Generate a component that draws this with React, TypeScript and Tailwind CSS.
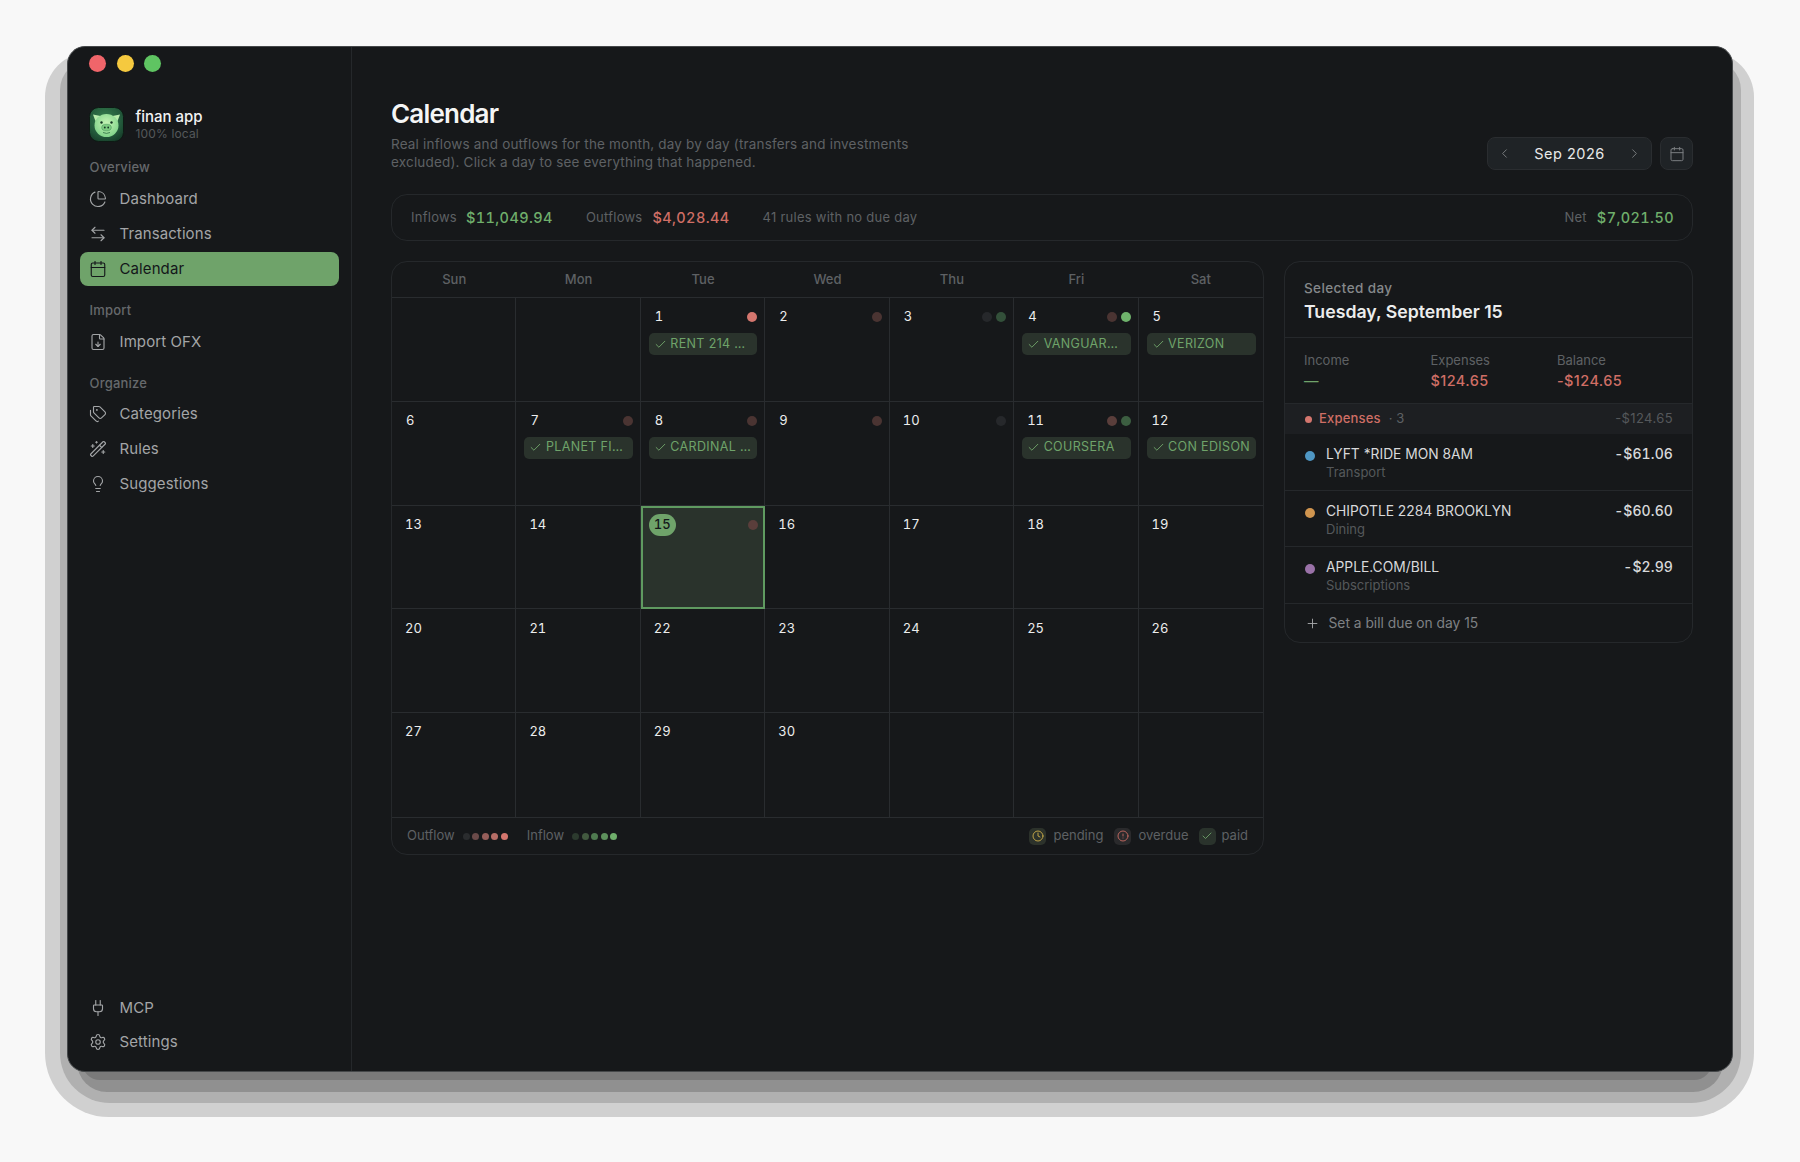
import React from 'react';
import {
  ArrowLeftRight,
  Calendar,
  ChartPie,
  Check,
  ChevronLeft,
  ChevronRight,
  CircleAlert,
  Clock,
  FileDown,
  Lightbulb,
  Plug,
  Plus,
  Settings,
  Tags,
  WandSparkles,
} from 'lucide-react';

const WEEKDAYS = ['Sun', 'Mon', 'Tue', 'Wed', 'Thu', 'Fri', 'Sat'];

interface DayCell {
  day?: number;
  out?: string;
  inflow?: string;
  bill?: string;
}

const CELLS: DayCell[] = [
  {},
  {},
  { day: 1, out: 'bg-[#d4766e]', bill: 'RENT 214 …' },
  { day: 2, out: 'bg-[#4a3432]' },
  { day: 3, out: 'bg-[#26282b]', inflow: 'bg-[#33503a]' },
  { day: 4, out: 'bg-[#4a3432]', inflow: 'bg-[#6fb36c]', bill: 'VANGUAR…' },
  { day: 5, bill: 'VERIZON' },
  { day: 6 },
  { day: 7, out: 'bg-[#4a3432]', bill: 'PLANET FI…' },
  { day: 8, out: 'bg-[#4a3432]', bill: 'CARDINAL …' },
  { day: 9, out: 'bg-[#4a3432]' },
  { day: 10, out: 'bg-[#26282b]' },
  { day: 11, out: 'bg-[#5a3e3b]', inflow: 'bg-[#3c5e41]', bill: 'COURSERA' },
  { day: 12, bill: 'CON EDISON' },
  { day: 13 },
  { day: 14 },
  { day: 15, out: 'bg-[#5a3e3b]' },
  { day: 16 },
  { day: 17 },
  { day: 18 },
  { day: 19 },
  { day: 20 },
  { day: 21 },
  { day: 22 },
  { day: 23 },
  { day: 24 },
  { day: 25 },
  { day: 26 },
  { day: 27 },
  { day: 28 },
  { day: 29 },
  { day: 30 },
  {},
  {},
  {},
];

const TRANSACTIONS = [
  { name: 'LYFT *RIDE MON 8AM', category: 'Transport', amount: '-$61.06', dot: 'bg-[#4f97c4]' },
  { name: 'CHIPOTLE 2284 BROOKLYN', category: 'Dining', amount: '-$60.60', dot: 'bg-[#d0954f]' },
  { name: 'APPLE.COM/BILL', category: 'Subscriptions', amount: '-$2.99', dot: 'bg-[#9a72a8]' },
];

function PigLogo() {
  return (
    <svg viewBox="0 0 35 35" className="h-[35px] w-[35px] shrink-0">
      <defs>
        <radialGradient id="pigBg" cx="0.45" cy="0.35" r="0.8">
          <stop offset="0" stopColor="#37804f" />
          <stop offset="0.6" stopColor="#235a3b" />
          <stop offset="1" stopColor="#123324" />
        </radialGradient>
        <radialGradient id="pigFace" cx="0.5" cy="0.4" r="0.65">
          <stop offset="0" stopColor="#c4f3b4" />
          <stop offset="1" stopColor="#7ad086" />
        </radialGradient>
      </defs>
      <rect x="0.5" y="0.5" width="34" height="34" rx="9" fill="url(#pigBg)" stroke="#0e1a14" />
      <path d="M4 7.5 L14 9.5 L8 18 Z" fill="#b8ecac" />
      <path d="M31 7.5 L21 9.5 L27 18 Z" fill="#b8ecac" />
      <ellipse cx="17.5" cy="18.5" rx="12" ry="11.5" fill="url(#pigFace)" />
      <circle cx="12.5" cy="15.5" r="1.2" fill="#143524" />
      <circle cx="22.5" cy="15.5" r="1.2" fill="#143524" />
      <ellipse cx="17.5" cy="20.5" rx="4.8" ry="3.3" fill="#7ccb80" stroke="#3f8a55" strokeWidth="0.5" />
      <circle cx="15.8" cy="20.5" r="0.9" fill="#143524" />
      <circle cx="19.2" cy="20.5" r="0.9" fill="#143524" />
      <path d="M14 25.5 Q17.5 27.3 21 25.5" stroke="#2c6b41" strokeWidth="0.8" fill="none" />
    </svg>
  );
}

function NavItem({ icon: Icon, label, active }: { icon: React.ElementType; label: string; active?: boolean }) {
  return (
    <div
      className={`flex h-[34px] items-center gap-[12.5px] rounded-lg px-[9.5px] text-[15px] tracking-[0.1px] ${
        active ? 'bg-[#6fa36a] text-[#14171a]' : 'text-[#a3a5a7]'
      }`}
    >
      <Icon className="h-[18px] w-[18px] shrink-0" strokeWidth={1.5} />
      <span>{label}</span>
    </div>
  );
}

function NavLabel({ children }: { children: React.ReactNode }) {
  return <div className="flex h-[20px] items-center px-[10px] text-[13px] font-medium tracking-[0.2px] text-[#66696c]">{children}</div>;
}

function Sidebar() {
  return (
    <aside className="flex w-[284px] shrink-0 flex-col border-r border-[#25282b] pb-[12px] pl-[11.5px] pr-[12px] pt-[7.5px]">
      <div className="flex h-[17px] items-center gap-[10.5px] pl-[9.5px]">
        <span className="h-[17px] w-[17px] rounded-full bg-[#f0656a]" />
        <span className="h-[17px] w-[17px] rounded-full bg-[#f5c93f]" />
        <span className="h-[17px] w-[17px] rounded-full bg-[#5fc462]" />
      </div>
      <div className="mt-[35px] flex items-center gap-[12px] pl-[9px]">
        <PigLogo />
        <div>
          <div className="text-[15px] font-medium leading-[20px] text-[#f2f3f3]">finan app</div>
          <div className="text-[12px] leading-[14px] tracking-[0.15px] text-[#55585b]">100% local</div>
        </div>
      </div>
      <div className="mt-[16.5px]">
        <NavLabel>Overview</NavLabel>
      </div>
      <div className="mt-[4px] flex flex-col gap-px">
        <NavItem icon={ChartPie} label="Dashboard" />
        <NavItem icon={ArrowLeftRight} label="Transactions" />
        <NavItem icon={Calendar} label="Calendar" active />
      </div>
      <div className="mt-[15px]">
        <NavLabel>Import</NavLabel>
      </div>
      <div className="mt-[4px]">
        <NavItem icon={FileDown} label="Import OFX" />
      </div>
      <div className="mt-[14.5px]">
        <NavLabel>Organize</NavLabel>
      </div>
      <div className="mt-[3.5px] flex flex-col gap-px">
        <NavItem icon={Tags} label="Categories" />
        <NavItem icon={WandSparkles} label="Rules" />
        <NavItem icon={Lightbulb} label="Suggestions" />
      </div>
      <div className="mt-auto flex flex-col">
        <NavItem icon={Plug} label="MCP" />
        <NavItem icon={Settings} label="Settings" />
      </div>
    </aside>
  );
}

function Header() {
  return (
    <div className="flex items-end justify-between">
      <div>
        <h1 className="text-[26px] font-semibold leading-[32px] tracking-[-0.8px] text-[#f4f5f5]">Calendar</h1>
        <p className="mt-[5px] max-w-[560px] text-[13.5px] leading-[18px] tracking-[0.18px] text-[#5e6164]">
          Real inflows and outflows for the month, day by day (transfers and investments excluded). Click a day to see everything that happened.
        </p>
      </div>
      <div className="mb-px flex gap-[8px]">
        <div className="flex h-[33px] w-[165px] items-center justify-between rounded-lg border border-[#2a2d30] bg-[#1f2326] px-[9px]">
          <ChevronLeft className="h-[15px] w-[15px] text-[#7b7e80]" strokeWidth={1.5} />
          <span className="text-[14.5px] tracking-[0.5px] text-[#e8e9e9]">Sep 2026</span>
          <ChevronRight className="h-[15px] w-[15px] text-[#7b7e80]" strokeWidth={1.5} />
        </div>
        <div className="flex h-[33px] w-[33px] items-center justify-center rounded-lg border border-[#2a2d30] bg-[#1f2326]">
          <Calendar className="h-[16px] w-[16px] text-[#7b7e80]" strokeWidth={1.5} />
        </div>
      </div>
    </div>
  );
}

function StatsBar() {
  return (
    <div className="mt-[23px] flex h-[47px] items-center rounded-2xl border border-[#25282b] pl-[19px] pr-[18px] text-[13px] tracking-[0.25px] text-[#5e6164]">
      <span>Inflows</span>
      <span className="ml-[9px] text-[14.5px] font-medium tabular-nums tracking-[0.4px] text-[#6fae6b]">$11,049.94</span>
      <span className="ml-[33px]">Outflows</span>
      <span className="ml-[10px] text-[14.5px] font-medium tabular-nums tracking-[0.4px] text-[#cf6e65]">$4,028.44</span>
      <span className="ml-[33px]">41 rules with no due day</span>
      <span className="ml-auto">Net</span>
      <span className="ml-[10px] text-[14.5px] font-medium tabular-nums tracking-[0.4px] text-[#6fae6b]">$7,021.50</span>
    </div>
  );
}

function Day({ cell, index }: { cell: DayCell; index: number }) {
  const selected = cell.day === 15;
  const lastCol = index % 7 === 6;
  const lastRow = index >= 28;
  const singleDigit = cell.day !== undefined && cell.day < 10;
  return (
    <div
      className={`flex min-w-0 flex-col ${
        selected
          ? 'border-2 border-[#5f9a60] bg-[#2a332c] pl-[6px] pr-[5px] pt-[6px]'
          : `border-[#292c2f] pl-[8px] pr-[7px] pt-[8px] ${lastCol ? '' : 'border-r'} ${lastRow ? '' : 'border-b'}`
      }`}
    >
      {cell.day !== undefined && (
        <div className="flex h-[22px] items-center justify-between">
          <span
            className={`flex h-[22px] items-center rounded-full text-[13px] tabular-nums ${singleDigit ? 'px-[6px]' : 'px-[5px]'} ${
              selected ? 'bg-[#6fa36a] font-medium text-[#14171a]' : 'text-[#eceded]'
            }`}
          >
            {cell.day}
          </span>
          <span className="flex items-center gap-[4px]">
            {cell.out && <span className={`h-[10px] w-[10px] rounded-full ${cell.out}`} />}
            {cell.inflow && <span className={`h-[10px] w-[10px] rounded-full ${cell.inflow}`} />}
          </span>
        </div>
      )}
      {cell.bill && (
        <div className="mt-[5px] flex h-[22px] items-center gap-[3.5px] whitespace-nowrap rounded-[5px] bg-[#2a332c] pl-[5px] pr-[3px] text-[12.5px] tracking-[0.35px] text-[#6fa36a]">
          <Check className="h-[13px] w-[13px] shrink-0" strokeWidth={1.75} />
          <span>{cell.bill}</span>
        </div>
      )}
    </div>
  );
}

function LegendDots({ colors }: { colors: string[] }) {
  return (
    <span className="flex gap-[2.5px]">
      {colors.map((c) => (
        <span key={c} className={`h-[7px] w-[7px] rounded-full ${c}`} />
      ))}
    </span>
  );
}

function CalendarGrid() {
  return (
    <div className="w-[873px] shrink-0 overflow-hidden rounded-2xl border border-[#25282b]">
      <div className="grid h-[36px] grid-cols-7 border-b border-[#292c2f]">
        {WEEKDAYS.map((d) => (
          <div key={d} className="flex items-center justify-center text-[13px] font-medium text-[#5e6164]">
            {d}
          </div>
        ))}
      </div>
      <div className="grid h-[519px] grid-cols-7 grid-rows-5">
        {CELLS.map((cell, i) => (
          <Day key={i} cell={cell} index={i} />
        ))}
      </div>
      <div className="flex h-[37px] items-center border-t border-[#292c2f] pl-[15px] pr-[15px] text-[13px] text-[#5e6164]">
        <span>Outflow</span>
        <span className="ml-[8px]">
          <LegendDots colors={['bg-[#2a2c2e]', 'bg-[#6a4a49]', 'bg-[#965e5a]', 'bg-[#b56d66]', 'bg-[#d4766e]']} />
        </span>
        <span className="ml-[19px]">Inflow</span>
        <span className="ml-[8px]">
          <LegendDots colors={['bg-[#2c3a2e]', 'bg-[#42593f]', 'bg-[#4f7a50]', 'bg-[#5d905c]', 'bg-[#6fae6b]']} />
        </span>
        <span className="ml-auto flex h-[17px] w-[17px] items-center justify-center rounded-[5px] bg-[#2c322b]">
          <Clock className="h-[12px] w-[12px] text-[#d4b24c]" strokeWidth={1.75} />
        </span>
        <span className="ml-[7px]">pending</span>
        <span className="ml-[11px] flex h-[17px] w-[17px] items-center justify-center rounded-[5px] bg-[#2a2a2c]">
          <CircleAlert className="h-[12px] w-[12px] text-[#cf6e65]" strokeWidth={1.75} />
        </span>
        <span className="ml-[7px]">overdue</span>
        <span className="ml-[10px] flex h-[17px] w-[17px] items-center justify-center rounded-[5px] bg-[#2a332c]">
          <Check className="h-[12px] w-[12px] text-[#6fa36a]" strokeWidth={1.75} />
        </span>
        <span className="ml-[6px]">paid</span>
      </div>
    </div>
  );
}

function DayPanel() {
  return (
    <div className="w-[409px] shrink-0 self-start overflow-hidden rounded-2xl border border-[#25282b]">
      <div className="h-[76px] border-b border-[#25282b] px-[19px] pt-[17px]">
        <div className="text-[13.5px] font-medium leading-[18px] tracking-[0.4px] text-[#85888a]">Selected day</div>
        <div className="mt-[3px] text-[17.7px] font-semibold leading-[24px] text-[#eceded]">Tuesday, September 15</div>
      </div>
      <div className="grid h-[66px] grid-cols-[126.5px_126.5px_1fr] border-b border-[#25282b] px-[19px] pt-[13px] text-[13px] leading-[18px] text-[#5e6164]">
        <div>
          <div>Income</div>
          <div className="mt-[3px] text-[14.5px] font-medium tracking-[0.4px] text-[#6fa36a]">—</div>
        </div>
        <div>
          <div>Expenses</div>
          <div className="mt-[3px] text-[14.5px] font-medium tracking-[0.4px] text-[#cf6e65]">$124.65</div>
        </div>
        <div>
          <div>Balance</div>
          <div className="mt-[3px] text-[14.5px] font-medium tracking-[0.4px] text-[#cf6e65]">-$124.65</div>
        </div>
      </div>
      <div className="flex h-[30px] items-center bg-[#1d1f22] pl-[20px] pr-[19px] text-[13px]">
        <span className="h-[7px] w-[7px] rounded-full bg-[#d4766e]" />
        <span className="ml-[7px] font-medium tracking-[0.2px] text-[#cf6e65]">Expenses</span>
        <span className="ml-[8px] text-[#5e6164]">· 3</span>
        <span className="ml-auto tracking-[0.4px] text-[#55585b]">-$124.65</span>
      </div>
      {TRANSACTIONS.map((t) => (
        <div key={t.name} className="flex h-[56.5px] border-b border-[#25282b] pl-[20px] pr-[19px] pt-[10px]">
          <span className={`mt-[7px] h-[10px] w-[10px] shrink-0 rounded-full ${t.dot}`} />
          <div className="ml-[11px] min-w-0 flex-1">
            <div className="text-[13.8px] leading-[20px] text-[#d8d9da]">{t.name}</div>
            <div className="text-[13px] leading-[17px] text-[#55585b]">{t.category}</div>
          </div>
          <div className="text-[14px] font-medium leading-[20px] tabular-nums tracking-[0.1px] text-[#d8d9da]">{t.amount}</div>
        </div>
      ))}
      <div className="flex h-[38px] items-center pl-[19.5px] pt-px text-[13.8px] text-[#7e8184]">
        <Plus className="h-[15px] w-[15px] text-[#a3a5a7]" strokeWidth={1.5} />
        <span className="ml-[9px]">Set a bill due on day 15</span>
      </div>
    </div>
  );
}

export default function App() {
  return (
    <div className="relative h-[1162px] w-[1800px] overflow-hidden bg-[#f8f8f8] pl-[67px] pt-[46px] font-['Inter',sans-serif]">
      {/* stepped window shadow, lies under the window */}
      <div className="absolute left-[45px] top-[52px] h-[1065px] w-[1709px] rounded-b-[64px] rounded-t-[45px] bg-[#d0d0d0]" />
      <div className="absolute left-[60px] top-[60px] h-[1043px] w-[1681px] rounded-b-[50px] rounded-t-[30px] bg-[#b0b0b0]" />
      <div className="absolute left-[77px] top-[80px] h-[1012px] w-[1646px] rounded-[30px] bg-[#909090]" />
      <div className="absolute left-[82px] top-[80px] h-[1000px] w-[1630px] rounded-[18px] bg-[#7a7a7a]" />
      <div className="relative flex h-[1026px] w-[1666px] overflow-hidden rounded-[18px] border border-[#45484a] bg-[#16181a]">
        <Sidebar />
        <main className="min-w-0 flex-1 pl-[39px] pr-[39px] pt-[51px]">
          <Header />
          <StatsBar />
          <div className="mt-[20px] flex gap-[20px]">
            <CalendarGrid />
            <DayPanel />
          </div>
        </main>
      </div>
    </div>
  );
}
